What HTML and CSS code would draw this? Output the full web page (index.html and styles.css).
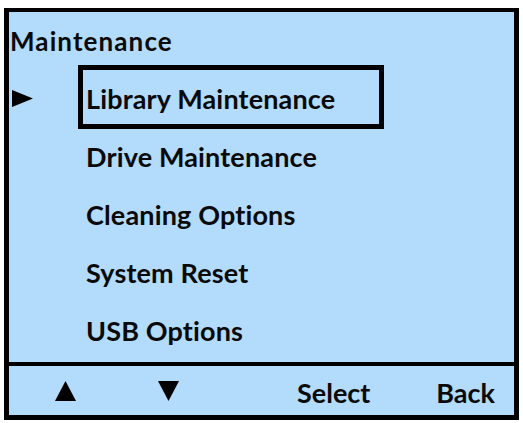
FILE: index.html
```html
<!DOCTYPE html>
<html>
<head>
<meta charset="utf-8">
<link rel="stylesheet" href="styles.css">
</head>
<body>
<div class="screen">
  <div class="content">
    <div class="title">Maintenance</div>
    <div class="menu">
      <div class="row">
        <div class="pointer"><svg width="21" height="17" viewBox="0 0 21 17"><polygon points="0,0 21,8.5 0,17" fill="#000"/></svg></div>
        <div class="label selected">Library Maintenance</div>
      </div>
      <div class="row">
        <div class="pointer"></div>
        <div class="label">Drive Maintenance</div>
      </div>
      <div class="row">
        <div class="pointer"></div>
        <div class="label">Cleaning Options</div>
      </div>
      <div class="row">
        <div class="pointer"></div>
        <div class="label">System Reset</div>
      </div>
      <div class="row">
        <div class="pointer"></div>
        <div class="label">USB Options</div>
      </div>
    </div>
  </div>
  <div class="footer">
    <div class="key key-up"><svg width="21" height="20" viewBox="0 0 21 20"><polygon points="10.5,0 21,20 0,20" fill="#000"/></svg></div>
    <div class="key key-down"><svg width="21" height="20" viewBox="0 0 21 20"><polygon points="0,0 21,0 10.5,20" fill="#000"/></svg></div>
    <div class="key key-select">Select</div>
    <div class="key key-back">Back</div>
  </div>
</div>
</body>
</html>
```

FILE: styles.css
```css
html, body {
  margin: 0;
  padding: 0;
  background: #ffffff;
}

body {
  font-family: Lato, "Open Sans", "DejaVu Sans", sans-serif;
  color: #0a0a0a;
}

.screen {
  box-sizing: border-box;
  width: 515px;
  height: 412px;
  margin: 8px 0 0 4px;
  border: 5px solid #000;
  border-top-width: 4px;
  background: #b3dbfb;
  display: flex;
  flex-direction: column;
}

.content {
  flex: 1;
  display: flex;
  flex-direction: column;
}

.title {
  box-sizing: border-box;
  height: 56px;
  padding: 17px 0 0 1px;
  font-size: 26px;
  font-weight: 700;
  line-height: 25px;
  letter-spacing: 1.1px;
}

.menu {
  display: flex;
  flex-direction: column;
}

.row {
  height: 58px;
  display: flex;
  align-items: center;
}

.pointer {
  width: 66px;
  padding-left: 3px;
  display: flex;
  align-items: center;
}

.pointer svg {
  display: block;
  margin-top: 2px;
}

.label {
  box-sizing: border-box;
  width: 306px;
  height: 64px;
  padding: 3px 0 0 3px;
  border: 5px solid transparent;
  display: flex;
  align-items: center;
  font-size: 27px;
  font-weight: 700;
  letter-spacing: 0.15px;
}

.label.selected {
  border-color: #000;
}

.footer {
  box-sizing: border-box;
  height: 53px;
  padding-top: 4px;
  border-top: 4px solid #000;
  display: grid;
  grid-template-columns: 103px 103px 140px 1fr;
  align-items: center;
  font-size: 27px;
  font-weight: 700;
}

.key {
  display: flex;
  align-items: center;
}

.key-up,
.key-down {
  padding-left: 46px;
}

.key-up svg,
.key-down svg {
  display: block;
  margin-top: -4px;
}

.key-select {
  padding-left: 82px;
}

.key-back {
  justify-content: flex-end;
  padding-right: 19px;
}
```
